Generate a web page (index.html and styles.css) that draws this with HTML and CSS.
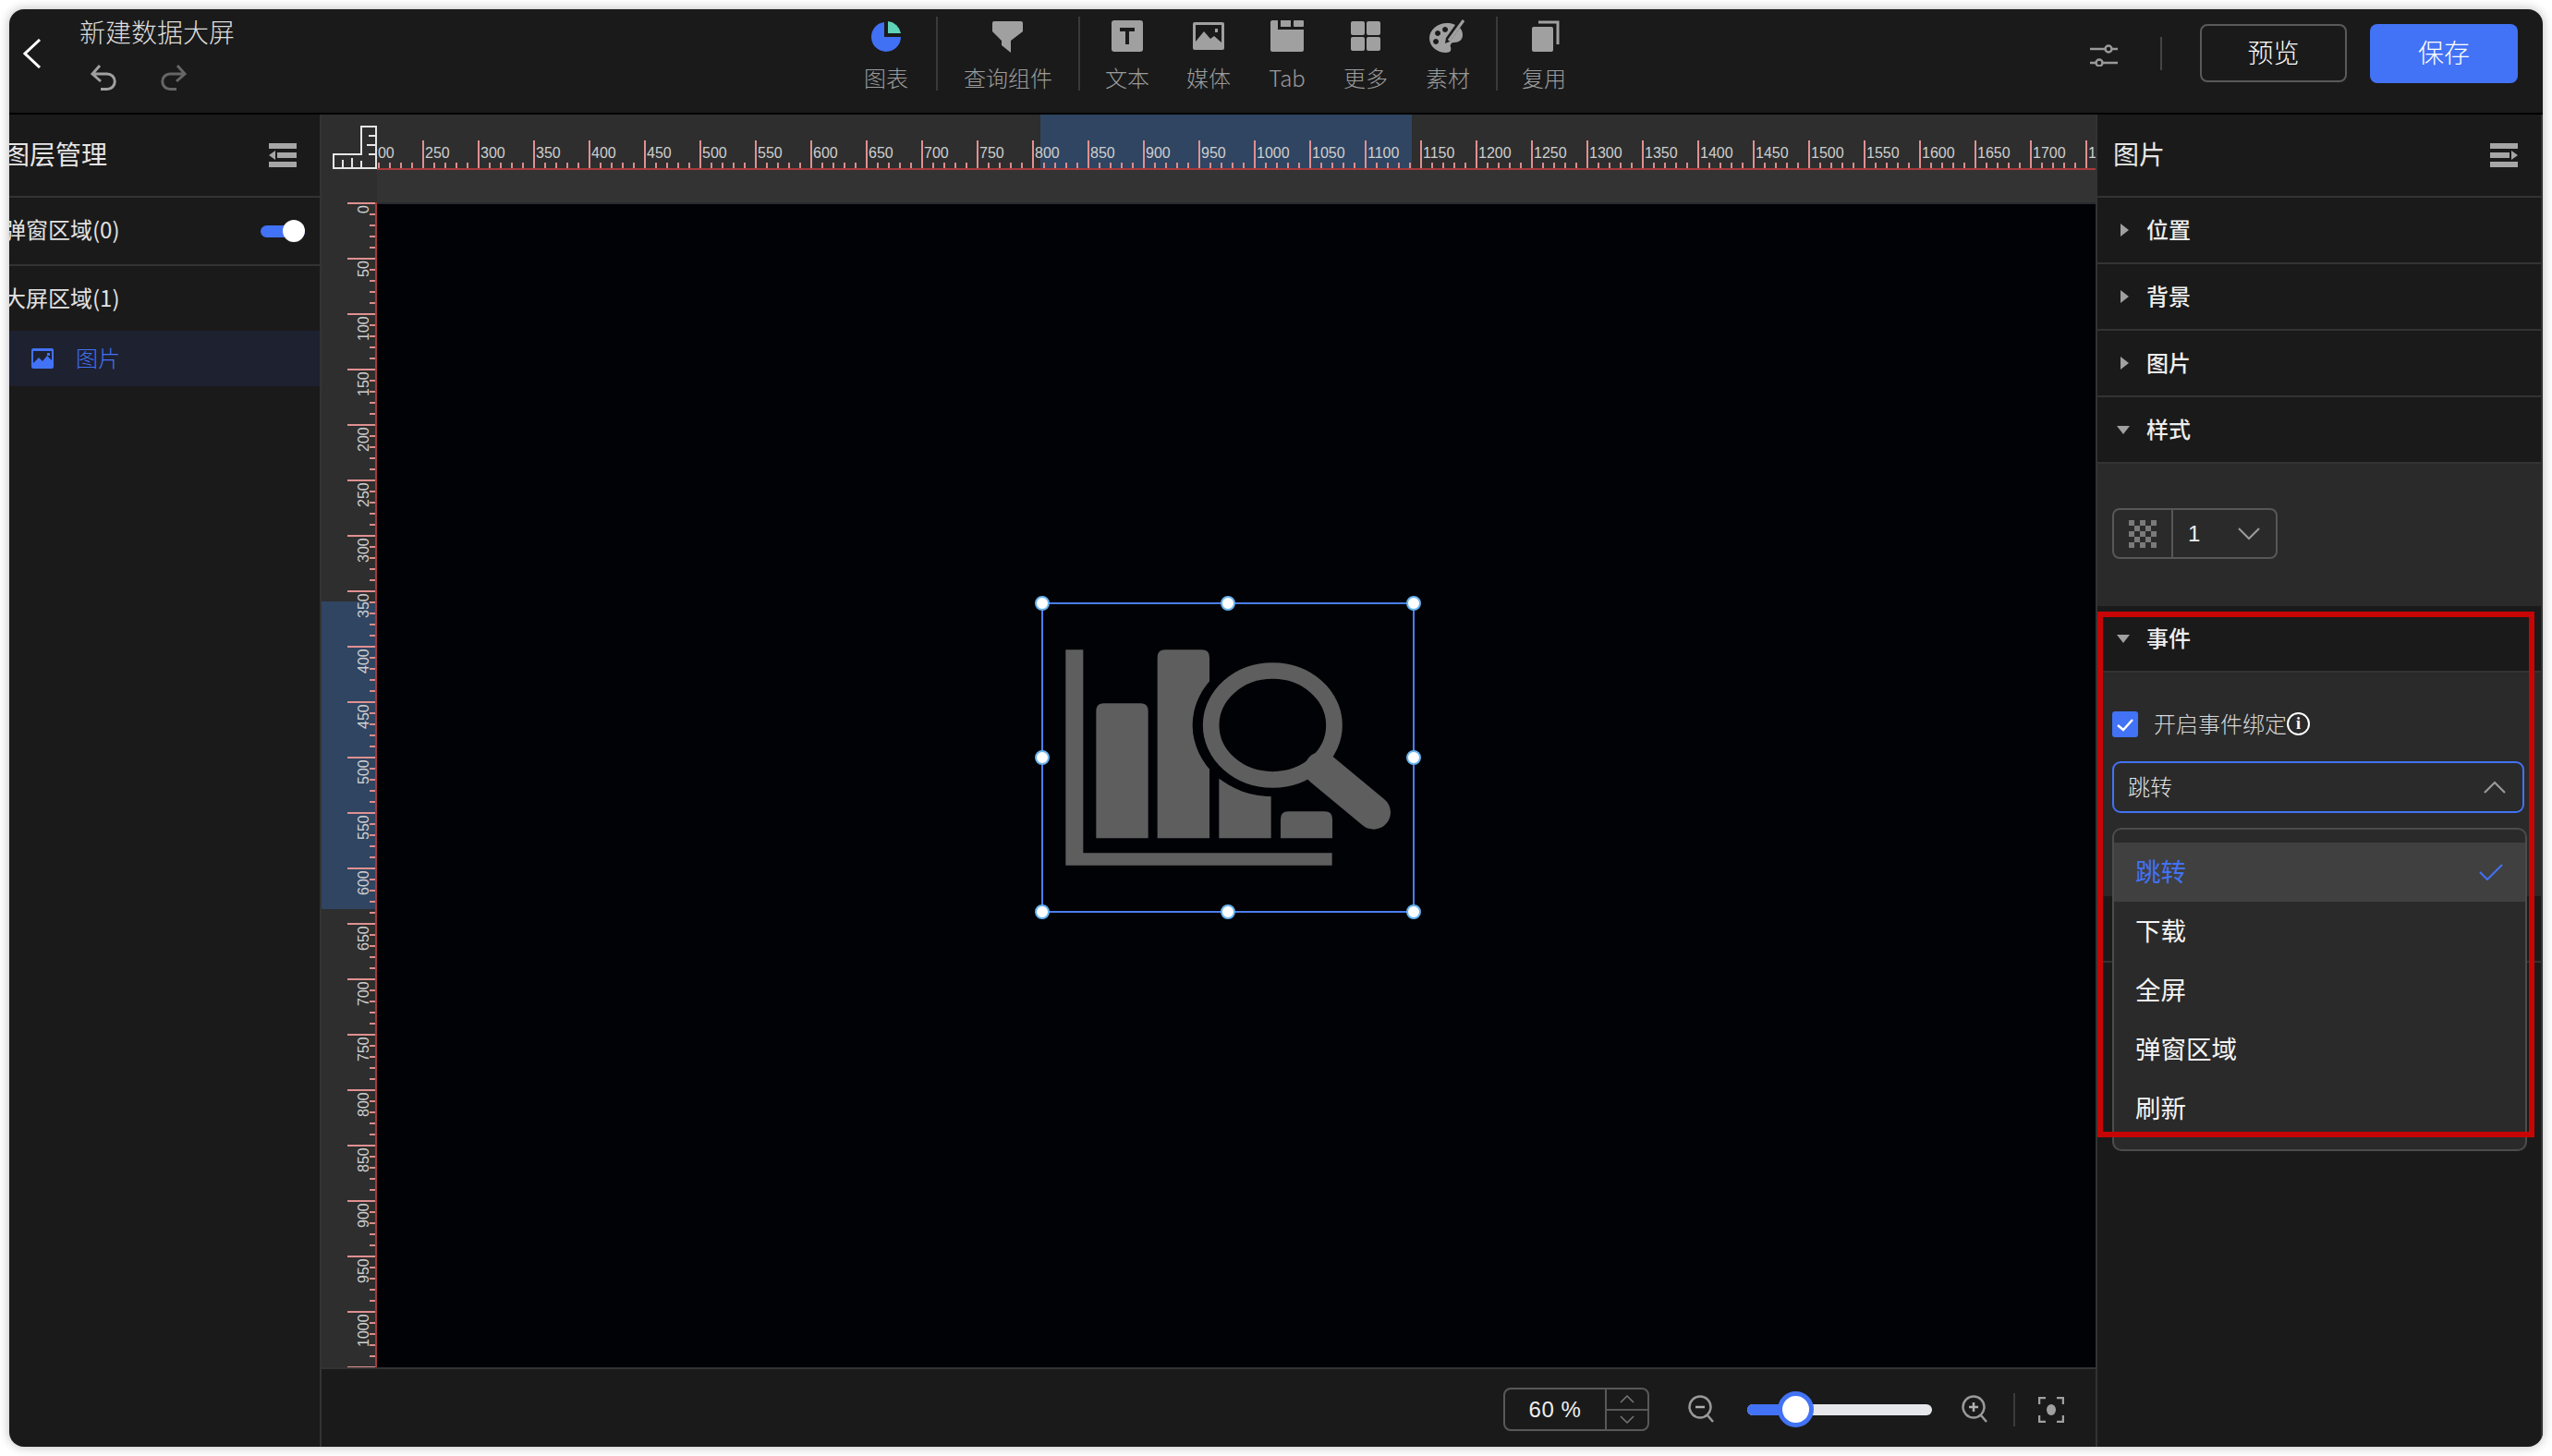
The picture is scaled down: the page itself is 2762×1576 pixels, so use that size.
FILE: index.html
```html
<!DOCTYPE html>
<html lang="zh-CN">
<head>
<meta charset="utf-8">
<title>新建数据大屏</title>
<link rel="stylesheet" href="styles.css">
</head>
<body>
<div class="window">
  <header class="topbar">
    <div class="top-left">
      <svg class="back" viewBox="0 0 20 32"><polyline points="18,1 2,16 18,31"/></svg>
      <div class="doc">
        <div class="doc-title">新建数据大屏</div>
        <div class="history">
          <svg class="hist undo" viewBox="0 0 30 28"><path d="M10 1 L2 10 L11 18 M2 10 H18 A8.2 8.2 0 0 1 18 26.5 H11"/></svg>
          <svg class="hist redo" viewBox="0 0 30 28"><path d="M20 1 L28 10 L19 18 M28 10 H12 A8.2 8.2 0 0 0 12 26.5 H19"/></svg>
        </div>
      </div>
    </div>
    <nav class="toolbar">
      <div class="tool w-chart">
        <svg class="tool-icon" viewBox="0 0 40 36"><path fill="#4070f4" d="M18 3 A16 16 0 1 0 36 19 H18 Z"/><path fill="#5fd3b8" d="M22 2 A16 16 0 0 1 36 15 H22 Z"/></svg>
        <span>图表</span>
      </div>
      <i class="tool-sep"></i>
      <div class="tool w-query">
        <svg class="tool-icon" viewBox="0 0 40 36"><path fill="#a0a0a0" d="M5 2 Q3 2 3 4 V13 L13 23 V28 L23 36 V23 L36 13 V4 Q36 2 34 2 Z"/></svg>
        <span>查询组件</span>
      </div>
      <i class="tool-sep"></i>
      <div class="tool w-text">
        <svg class="tool-icon" viewBox="0 0 40 36"><rect x="3" y="1" width="34" height="34" rx="3" fill="#a0a0a0"/><path fill="#1a1a1a" d="M12 9 H28 V13 H22 V27 H18 V13 H12 Z"/></svg>
        <span>文本</span>
      </div>
      <div class="tool w-media">
        <svg class="tool-icon" viewBox="0 0 40 36"><rect x="3" y="3" width="34" height="30" rx="2" fill="#a0a0a0"/><rect x="6" y="6" width="28" height="24" fill="#1a1a1a"/><path fill="#a0a0a0" d="M6 30 V24 L15 13 L22 21 L26 18 L34 25 V30 Z"/><rect x="27" y="10" width="3" height="4" fill="#a0a0a0"/></svg>
        <span>媒体</span>
      </div>
      <div class="tool w-tab">
        <svg class="tool-icon" viewBox="0 0 40 36"><path fill="#a0a0a0" d="M2 3 Q2 1 4 1 H10 V11 H38 V33 Q38 35 36 35 H4 Q2 35 2 33 Z"/><rect x="13" y="1" width="11" height="7" fill="#a0a0a0"/><rect x="27" y="1" width="11" height="7" rx="1" fill="#a0a0a0"/></svg>
        <span>Tab</span>
      </div>
      <div class="tool w-more">
        <svg class="tool-icon" viewBox="0 0 40 36"><rect x="4" y="2" width="15" height="15" rx="2" fill="#a0a0a0"/><rect x="21" y="2" width="15" height="15" rx="2" fill="#a0a0a0"/><rect x="4" y="19" width="15" height="15" rx="2" fill="#a0a0a0"/><rect x="21" y="19" width="15" height="15" rx="2" fill="#a0a0a0"/></svg>
        <span>更多</span>
      </div>
      <div class="tool w-asset">
        <svg class="tool-icon" viewBox="0 0 40 36"><path fill="#a0a0a0" d="M21 4 C10 3 0 11 0 20 C0 30 9 36 18 36 C23 36 24 33 23 30 C22 27 24 25 27 25 C32 25 36 22 36 17 C36 14 35 11 33 9 L22 24 L17 26 L18 20 L28 6 C26 5 24 4 21 4 Z"/><path fill="#1a1a1a" d="M9 12 a3 3 0 1 0 .1 0 Z M17 8 a3 3 0 1 0 .1 0 Z M7 21 a3 3 0 1 0 .1 0 Z"/><path stroke="#a0a0a0" stroke-width="3" fill="none" d="M21 23 L37 1"/></svg>
        <span>素材</span>
      </div>
      <i class="tool-sep"></i>
      <div class="tool w-reuse">
        <svg class="tool-icon" viewBox="0 0 40 36"><rect x="7" y="8" width="23" height="27" rx="2" fill="#a0a0a0"/><path stroke="#a0a0a0" stroke-width="3" fill="none" d="M14 3 H35 V27"/></svg>
        <span>复用</span>
      </div>
    </nav>
    <div class="top-right">
      <svg class="tune" viewBox="0 0 30 24"><path d="M0 5 H30 M0 20 H30"/><circle cx="20" cy="5" r="3.5"/><circle cx="10" cy="20" r="3.5"/></svg>
      <i class="top-sep"></i>
      <button class="btn btn-ghost"><span>预览</span></button>
      <button class="btn btn-primary"><span>保存</span></button>
    </div>
  </header>

  <main class="main">
    <aside class="layers">
      <div class="panel-head layers-head">
        <span class="panel-title">图层管理</span>
        <svg class="menu-icon" viewBox="0 0 30 26"><path d="M0 0 H30 V6 H0 Z M9 10 H30 V16 H9 Z M0 20 H30 V26 H0 Z M0 13 L7 8 V18 Z"/></svg>
      </div>
      <div class="layer-row bordered">
        <span class="layer-name">弹窗区域(0)</span>
        <span class="toggle"><i class="toggle-thumb"></i></span>
      </div>
      <div class="layer-row"><span class="layer-name">大屏区域(1)</span></div>
      <div class="layer-item">
        <svg class="layer-icon" viewBox="0 0 24 22"><rect width="24" height="22" rx="2" fill="#4272f5"/><path fill="#1e2130" d="M2 3 H22 V13 L17 8 L12 14 L8 10 L2 16 Z"/><rect x="17" y="5" width="3" height="3" fill="#4272f5"/></svg>
        <span class="layer-item-name">图片</span>
      </div>
    </aside>

    <section class="center">
      <div class="ruler-top">
        <div class="corner">
          <svg viewBox="0 0 48 47"><path d="M1 46 V31 H31 V1 H47 V46 Z M11 46 V37 M21 46 V35 M31 46 V38 M47 11 H39 M47 21 H37 M47 31 H39"/></svg>
        </div>
        <div class="ruler-h">
          <div class="ruler-h-mark"></div>
          <div class="ruler-h-scale">
            <span>200</span><span>250</span><span>300</span><span>350</span><span>400</span><span>450</span><span>500</span><span>550</span><span>600</span><span>650</span><span>700</span><span>750</span><span>800</span><span>850</span><span>900</span><span>950</span><span>1000</span><span>1050</span><span>1100</span><span>1150</span><span>1200</span><span>1250</span><span>1300</span><span>1350</span><span>1400</span><span>1450</span><span>1500</span><span>1550</span><span>1600</span><span>1650</span><span>1700</span><span>1750</span>
          </div>
        </div>
      </div>
      <div class="stage">
        <div class="ruler-v">
          <div class="ruler-v-mark"></div>
          <div class="ruler-v-scale">
            <span>0</span><span>50</span><span>100</span><span>150</span><span>200</span><span>250</span><span>300</span><span>350</span><span>400</span><span>450</span><span>500</span><span>550</span><span>600</span><span>650</span><span>700</span><span>750</span><span>800</span><span>850</span><span>900</span><span>950</span><span>1000</span><span>1050</span>
          </div>
        </div>
        <div class="stage-main">
          <div class="strip"></div>
          <div class="canvas">
            <div class="selection">
              <svg class="picture" viewBox="150 210 1080 720">
                <path d="M160 220 H217 V880 H1025 V920 H160 Z"/>
                <path d="M259 832 V419 Q259 394 284 394 H403 Q428 394 428 419 V832 Z"/>
                <path d="M458 832 V245 Q458 220 483 220 H602 Q627 220 627 245 V832 Z"/>
                <path d="M658 832 V640 H827 V832 Z"/>
                <path d="M858 832 V770 Q858 745 883 745 H1001 Q1026 745 1026 770 V832 Z"/>
                <ellipse class="halo" cx="832" cy="465" rx="260" ry="232"/>
                <path class="handle-bar" d="M990 607 L1160 748"/>
                <ellipse class="lens" cx="832" cy="465" rx="200" ry="177"/>
              </svg>
              <i class="hd hd-tl"></i><i class="hd hd-tc"></i><i class="hd hd-tr"></i>
              <i class="hd hd-ml"></i><i class="hd hd-mr"></i>
              <i class="hd hd-bl"></i><i class="hd hd-bc"></i><i class="hd hd-br"></i>
            </div>
          </div>
        </div>
      </div>
      <footer class="zoombar">
        <div class="zoom-input">
          <span class="zoom-value">60 %</span>
          <div class="zoom-steps">
            <span class="step"><svg viewBox="0 0 16 10"><polyline points="1,9 8,2 15,9"/></svg></span>
            <span class="step"><svg viewBox="0 0 16 10"><polyline points="1,1 8,8 15,1"/></svg></span>
          </div>
        </div>
        <svg class="zoom-icon zoom-out" viewBox="0 0 30 30"><circle cx="13" cy="13" r="11.5"/><path d="M21 22 L27 29"/><path class="zoom-glyph" d="M8 13 H18"/></svg>
        <div class="slider"><i class="slider-fill"></i><i class="slider-thumb"></i></div>
        <svg class="zoom-icon zoom-in" viewBox="0 0 30 30"><circle cx="13" cy="13" r="11.5"/><path d="M21 22 L27 29"/><path class="zoom-glyph" d="M8 13 H18 M13 8 V18"/></svg>
        <i class="zoom-sep"></i>
        <svg class="focus" viewBox="0 0 28 28"><path d="M1 8 V1 H8 M20 1 H27 V8 M27 20 V27 H20 M8 27 H1 V20"/><ellipse cx="14" cy="14" rx="5" ry="6"/></svg>
      </footer>
    </section>

    <aside class="props">
      <div class="panel-head">
        <span class="panel-title">图片</span>
        <svg class="menu-icon" viewBox="0 0 30 26"><path d="M0 0 H30 V6 H0 Z M0 10 H21 V16 H0 Z M0 20 H30 V26 H0 Z M30 13 L23 8 V18 Z"/></svg>
      </div>
      <div class="sec"><i class="tri tri-right"></i><span class="sec-name">位置</span></div>
      <div class="sec"><i class="tri tri-right"></i><span class="sec-name">背景</span></div>
      <div class="sec"><i class="tri tri-right"></i><span class="sec-name">图片</span></div>
      <div class="sec"><i class="tri tri-down"></i><span class="sec-name">样式</span></div>
      <div class="sec-body style-body">
        <div class="opacity">
          <span class="opacity-swatch"><i class="checker"></i></span>
          <span class="opacity-value">1</span>
          <svg class="chev" viewBox="0 0 24 14"><polyline points="1,1 12,12 23,1"/></svg>
        </div>
      </div>
      <div class="sec"><i class="tri tri-down"></i><span class="sec-name">事件</span></div>
      <div class="sec-body event-body">
        <label class="check-row">
          <span class="checkbox"><svg viewBox="0 0 28 28"><polyline points="6,15 12,20 22,9"/></svg></span>
          <span class="check-text">开启事件绑定</span>
          <span class="info">i</span>
        </label>
        <div class="select">
          <span class="select-text">跳转</span>
          <svg class="chev" viewBox="0 0 24 14"><polyline points="1,13 12,2 23,13"/></svg>
        </div>
        <div class="dropdown">
          <div class="opt opt-active"><span class="opt-text">跳转</span><svg viewBox="0 0 26 18"><polyline points="1,9 9,17 25,1"/></svg></div>
          <div class="opt"><span class="opt-text">下载</span></div>
          <div class="opt"><span class="opt-text">全屏</span></div>
          <div class="opt"><span class="opt-text">弹窗区域</span></div>
          <div class="opt"><span class="opt-text">刷新</span></div>
        </div>
      </div>
      <div class="sec sec-empty"></div>
      <div class="annotation"></div>
    </aside>
  </main>
</div>
</body>
</html>
```

FILE: styles.css
```css
* { box-sizing: border-box; }
html, body { margin: 0; padding: 0; background: #fff; }
body {
  width: 2762px;
  height: 1576px;
  overflow: hidden;
  font-family: "Noto Sans CJK SC", "Liberation Sans", sans-serif;
  color: #e4e4e4;
}
i { display: block; font-style: normal; }
svg { display: block; }

.window {
  margin: 10px 0 0 10px;
  width: 2742px;
  height: 1556px;
  background: #1a1a1a;
  border-radius: 16px;
  box-shadow: 0 0 12px rgba(0, 0, 0, .28);
  overflow: hidden;
  display: flex;
  flex-direction: column;
}

/* top bar */
.topbar {
  height: 114px;
  flex: none;
  display: flex;
  border-bottom: 2px solid #000;
  padding-right: 27px;
}
.top-left { width: 896px; flex: none; display: flex; }
.back { width: 20px; height: 32px; margin: 32px 0 0 15px; fill: none; stroke: #fff; stroke-width: 3; }
.doc { margin-left: 41px; }
.doc-title { font-size: 28px; line-height: 40px; margin-top: 4px; color: #dedede; font-weight: 300; }
.history { display: flex; gap: 44px; margin: 16px 0 0 12px; }
.hist { width: 30px; height: 28px; fill: none; stroke-width: 3; }
.undo { stroke: #a0a0a0; }
.redo { stroke: #666; }

.toolbar { display: flex; align-items: flex-start; padding-top: 8px; margin-left: -1px; }
.tool { display: flex; flex-direction: column; align-items: center; color: #9c9c9c; font-size: 24px; line-height: 34px; flex: none; padding-top: 2px; }
.tool-icon { width: 40px; height: 36px; margin: 1px 0 10px; }
.tool span { font-weight: 300; }
.tool-sep { width: 2px; height: 80px; background: #3a3a3a; flex: none; }
.w-chart { width: 108px; }
.w-query { width: 152px; }
.w-text { width: 102px; }
.w-media { width: 74px; }
.w-tab { width: 96px; }
.w-more { width: 74px; }
.w-asset { width: 104px; }
.w-reuse { width: 100px; }

.top-right { margin-left: auto; display: flex; align-items: flex-start; padding-top: 16px; }
.tune { width: 30px; height: 24px; margin: 22px 46px 0 0; fill: #1a1a1a; stroke: #999; stroke-width: 2.5; }
.top-sep { width: 2px; height: 36px; background: #444; margin: 14px 41px 0 0; }
.btn { height: 64px; width: 160px; border-radius: 8px; font: inherit; font-size: 28px; color: #fff; padding: 0 0 4px; font-weight: 300; }
.btn-ghost { background: transparent; border: 2px solid #5a5a5a; margin-right: 25px; width: 159px; height: 63px; }
.btn-primary { background: #4272f5; border: 0; }

/* main */
.main { flex: 1; display: flex; min-height: 0; }

.layers { width: 338px; flex: none; border-right: 2px solid #333; overflow: hidden; }
.panel-head { height: 90px; border-bottom: 2px solid #333; display: flex; align-items: center; justify-content: space-between; }
.layers-head { padding-right: 25px; }
.panel-title { font-size: 28px; color: #e6e6e6; margin-bottom: 4px; }
.layers-head .panel-title { margin-left: -6px; }
.menu-icon { width: 30px; height: 26px; fill: #a6a6a6; }
.layer-row { height: 72px; display: flex; align-items: center; justify-content: space-between; padding: 0 16px 0 0; font-size: 24px; color: #e2e2e2; }
.layer-name { margin: 0 0 6px -6px; }
.layer-row.bordered { height: 74px; border-bottom: 2px solid #333; }
.toggle { position: relative; width: 48px; height: 13px; background: #4272f5; border-radius: 7px; margin-left: auto; }
.toggle-thumb { position: absolute; right: 0; top: -6px; width: 24px; height: 24px; border-radius: 50%; background: #fff; }
.layer-item { height: 60px; margin-top: -2px; background: #1e2130; display: flex; align-items: center; padding-left: 24px; color: #4272f5; font-size: 24px; gap: 24px; font-weight: 300; }
.layer-item-name { margin-bottom: 3px; }
.layer-icon { width: 24px; height: 22px; }

.center { flex: 1; display: flex; flex-direction: column; min-width: 0; }
.ruler-top { height: 60px; flex: none; display: flex; background: #2e2e2e; }
.corner { width: 60px; flex: none; padding: 12px 0 0 12px; position: relative; z-index: 2; }
.corner svg { width: 48px; height: 47px; fill: none; stroke: #e6e6e6; stroke-width: 2; }
.ruler-h { flex: 1; position: relative; overflow: hidden; }
.ruler-h-mark { position: absolute; left: 718px; top: 0; width: 402px; height: 58px; background: #2f4562; }
.ruler-h-scale {
  position: relative;
  margin-left: -11px;
  width: 1920px;
  height: 60px;
  display: flex;
  padding-top: 30px;
  border-bottom: 2px solid #a83a3a;
  background:
    repeating-linear-gradient(to right, #e09090 0 2px, transparent 2px 60px) left bottom / 100% 30px no-repeat,
    repeating-linear-gradient(to right, #dc8c8c 0 2px, transparent 2px 12px) left bottom / 100% 6px no-repeat;
}
.ruler-h-scale span { width: 60px; flex: none; padding-left: 3px; font: 300 16px/24px "Liberation Sans", sans-serif; color: #cfcfcf; white-space: nowrap; overflow: hidden; }

.stage { flex: 1; display: flex; min-height: 0; }
.ruler-v { width: 60px; flex: none; background: #2e2e2e; position: relative; overflow: hidden; }
.ruler-v-mark { position: absolute; left: 0; top: 467px; width: 58px; height: 333px; background: #2f4562; }
.ruler-v-scale {
  position: relative;
  margin-top: 35px;
  height: 1320px;
  border-right: 2px solid #a83a3a;
  background:
    repeating-linear-gradient(to bottom, #e09090 0 2px, transparent 2px 60px) right top / 30px 100% no-repeat,
    repeating-linear-gradient(to bottom, #dc8c8c 0 2px, transparent 2px 12px) right top / 6px 100% no-repeat;
}
.ruler-v-scale span {
  display: block;
  height: 60px;
  writing-mode: vertical-rl;
  transform: rotate(180deg);
  width: 20px;
  margin-left: 36px;
  text-align: right;
  padding-bottom: 3px;
  font: 300 16px/20px "Liberation Sans", sans-serif;
  color: #cfcfcf;
  white-space: nowrap;
}
.stage-main { flex: 1; display: flex; flex-direction: column; min-width: 0; }
.strip { height: 37px; flex: none; background: #333; border-bottom: 2px solid #282a30; }
.canvas { flex: 1; background: #010206; position: relative; }

.selection { position: absolute; left: 719px; top: 431px; width: 404px; height: 336px; border: 2px solid #4a7df0; }
.picture { position: absolute; left: 21px; top: 46px; width: 360px; height: 240px; fill: #5e5e5e; }
.halo { fill: #010206; }
.lens { fill: none; stroke: #5e5e5e; stroke-width: 53; }
.handle-bar { fill: none; stroke: #5e5e5e; stroke-width: 110; stroke-linecap: round; }
.hd { position: absolute; width: 16px; height: 16px; border-radius: 50%; background: #fff; border: 2px solid #6ab4f0; }
.hd-tl { left: -9px; top: -9px; }
.hd-tc { left: 192px; top: -9px; }
.hd-tr { right: -9px; top: -9px; }
.hd-ml { left: -9px; top: 158px; }
.hd-mr { right: -9px; top: 158px; }
.hd-bl { left: -9px; bottom: -9px; }
.hd-bc { left: 192px; bottom: -9px; }
.hd-br { right: -9px; bottom: -9px; }

.zoombar {
  height: 86px;
  flex: none;
  border-top: 2px solid #333;
  display: flex;
  align-items: center;
  padding: 0 34px 0 1279px;
}
.zoom-input { width: 158px; height: 47px; border: 2px solid #585858; border-radius: 8px; display: flex; flex: none; margin-top: 3px; }
.zoom-value { width: 108px; text-align: center; font: 300 24px/43px "Liberation Sans", sans-serif; letter-spacing: .6px; color: #eee; }
.zoom-steps { flex: 1; border-left: 2px solid #585858; display: flex; flex-direction: column; }
.step { flex: 1; display: flex; align-items: center; justify-content: center; }
.step + .step { border-top: 2px solid #585858; }
.step svg { width: 16px; height: 10px; fill: none; stroke: #777; stroke-width: 1.5; }
.zoom-icon { width: 30px; height: 30px; fill: none; stroke: #9a9a9a; stroke-width: 2.5; flex: none; margin-top: 2px; }
.zoom-glyph { stroke-width: 2.5; stroke: #b0b0b0; }
.zoom-out { margin-left: 42px; margin-right: 34px; }
.slider { width: 200px; height: 12px; background: #e6e7eb; border-radius: 6px; position: relative; flex: none; margin-top: 4px; }
.slider-fill { position: absolute; left: 0; top: 0; height: 12px; width: 54px; background: #4272f5; border-radius: 6px 0 0 6px; }
.slider-thumb { position: absolute; left: 33px; top: -14px; width: 39px; height: 39px; border-radius: 50%; background: #fff; border: 5px solid #4272f5; }
.zoom-in { margin-left: 32px; }
.zoom-sep { width: 2px; height: 36px; background: #3a3a3a; margin: 4px 25px 0 26px; flex: none; }
.focus { width: 28px; height: 28px; fill: none; stroke: #a0a0a0; stroke-width: 2.5; flex: none; margin-top: 4px; }
.focus ellipse { fill: #a0a0a0; stroke: none; }

/* property panel */
.props { width: 484px; flex: none; border-left: 2px solid #333; border-right: 2px solid #333; position: relative; display: flex; flex-direction: column; }
.props .panel-head { padding: 0 25px 0 17px; flex: none; }
.sec { height: 72px; flex: none; border-bottom: 2px solid #333; display: flex; align-items: center; padding-left: 21px; font-size: 24px; color: #eee; gap: 18px; font-weight: 500; }
.sec-name { margin-bottom: 4px; }
.tri { width: 0; height: 0; flex: none; }
.tri-right { border-left: 9px solid #a0a0a0; border-top: 7px solid transparent; border-bottom: 7px solid transparent; margin: 0 1px 0 4px; }
.tri-down { border-top: 9px solid #a0a0a0; border-left: 7px solid transparent; border-right: 7px solid transparent; }
.sec-body { background: #2a2a2a; flex: none; position: relative; padding-left: 16px; }
.style-body { height: 154px; padding-top: 48px; }
.opacity { width: 179px; height: 55px; border: 2px solid #575757; border-radius: 8px; display: flex; align-items: center; }
.opacity-swatch { width: 64px; height: 100%; border-right: 2px solid #575757; display: flex; align-items: center; justify-content: center; flex: none; }
.checker { width: 30px; height: 30px; background: repeating-conic-gradient(#7a7a7a 0 25%, transparent 0 50%) 6px 0 / 12px 12px; }
.opacity-value { font: 300 24px/1 "Liberation Sans", sans-serif; color: #eee; margin-left: 16px; }
.chev { width: 24px; height: 14px; fill: none; stroke: #999; stroke-width: 2.2; margin-left: auto; }
.opacity .chev { margin-right: 17px; }
.event-body { height: 242px; padding-top: 42px; }
.check-row { display: flex; align-items: center; height: 28px; }
.checkbox { width: 28px; height: 28px; background: #4272f5; border-radius: 3px; flex: none; }
.checkbox svg { width: 28px; height: 28px; fill: none; stroke: #fff; stroke-width: 2.5; }
.check-text { margin: 0 0 4px 17px; font-size: 24px; color: #d8d8d8; font-weight: 300; }
.info { width: 25px; height: 25px; border: 2px solid #fff; border-radius: 50%; font: bold 18px/21px "Liberation Serif", serif; text-align: center; color: #fff; flex: none; margin-bottom: 1px; }
.select { margin-top: 26px; width: 446px; height: 56px; border: 2px solid #4272f5; border-radius: 9px; display: flex; align-items: center; padding: 0 18px 0 15px; font-size: 24px; color: #e4e4e4; font-weight: 300; }
.select-text { margin-bottom: 4px; }
.dropdown { position: absolute; left: 16px; top: 168px; width: 449px; height: 350px; background: #2a2a2a; border: 2.5px solid #4c4c4c; border-radius: 10px; padding-top: 13.5px; z-index: 3; }
.opt { height: 64px; display: flex; align-items: center; justify-content: space-between; padding: 0 24px 0 23px; font-size: 27.5px; color: #f4f4f4; }
.opt-text { margin-bottom: 4px; }
.opt-active { background: #404040; color: #4272f5; }
.opt svg { width: 26px; height: 18px; fill: none; stroke: #4272f5; stroke-width: 2; }
.sec-empty { height: 72px; background: #1a1a1a; }
.annotation { position: absolute; left: 0; top: 538px; width: 473px; height: 569px; border: 6px solid #c80505; z-index: 5; pointer-events: none; }
```
